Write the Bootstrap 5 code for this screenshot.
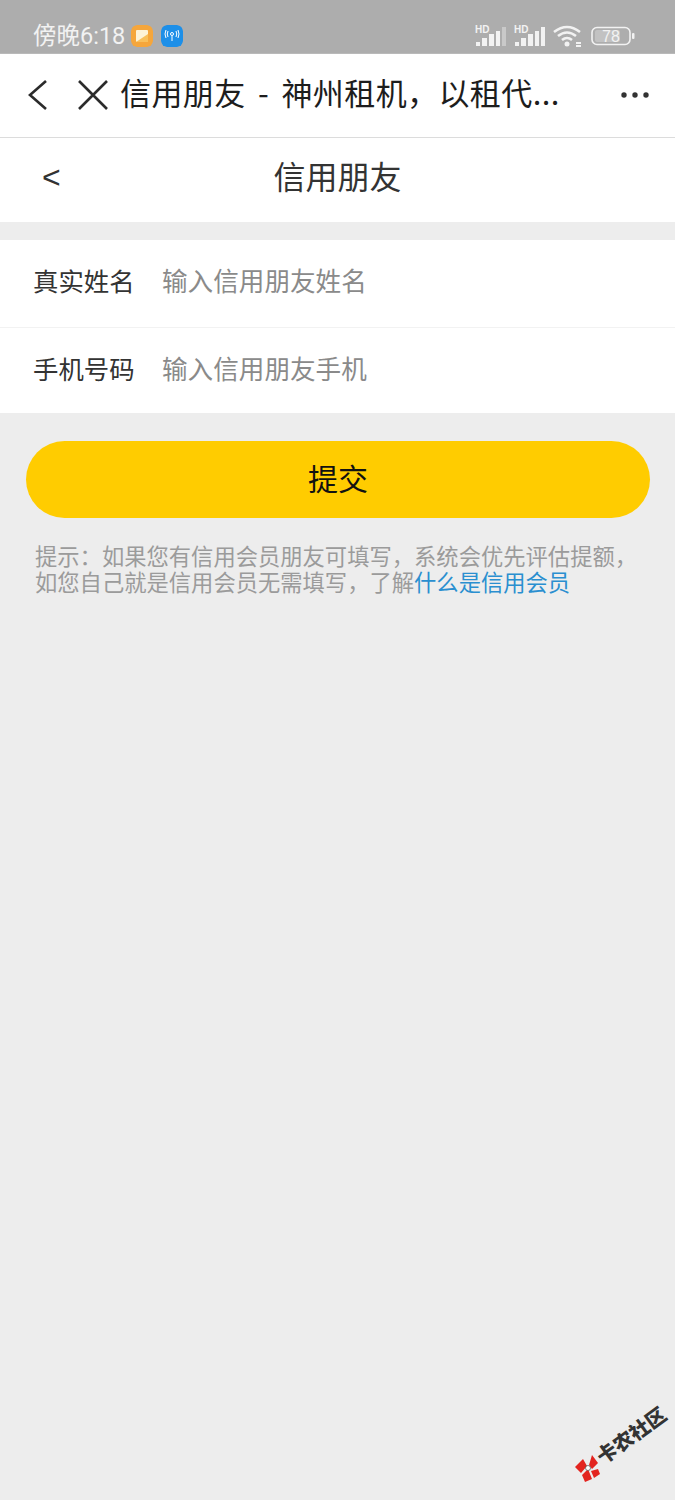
<!DOCTYPE html>
<html lang="zh-CN">
  <head>
    <meta charset="UTF-8" />
    <meta name="viewport" content="width=device-width, initial-scale=1.0" />
    <title>信用朋友</title>
    <link
      rel="stylesheet"
      href="https://cdn.jsdelivr.net/npm/bootstrap@5.3.3/dist/css/bootstrap.min.css"
    />
    <style>
      body {
        font-family: "Noto Sans CJK SC", "Liberation Sans", sans-serif;
        background: #ededed;
        height: 1500px;
        overflow: hidden;
      }
      .status-bar {
        height: 54px;
        background: #adadad;
        border-bottom: 1px solid #b9b9b9;
        padding: 18px 40px 0 33px;
        color: #f2f2f2;
      }
      .status-time {
        font-family: Roboto, "Noto Sans CJK SC", sans-serif;
        font-size: 23.5px;
        line-height: 37px;
        width: 98px;
        white-space: nowrap;
      }
      .app-tile {
        width: 22px;
        height: 22px;
        border-radius: 6px;
        margin-top: 7px;
      }
      .tile-gap {
        margin-right: 8px;
      }
      .status-icons {
        gap: 8px;
        margin-top: 7px;
      }
      .browser-bar {
        height: 84px;
        background: #fff;
        border-bottom: 1px solid #dcdcdc;
        padding: 0 25px 2px 26px;
      }
      .browser-title {
        font-size: 31px;
        letter-spacing: 0.4px;
        word-spacing: 5px;
        color: #1d1d1d;
        margin-left: 11px;
        padding-bottom: 4px;
        white-space: nowrap;
        width: 451px;
      }
      .back-btn {
        margin-right: 25px;
      }
      .page-head {
        height: 84px;
        background: #fff;
        position: relative;
        font-size: 32px;
        color: #333;
        padding-bottom: 10px;
      }
      .head-back {
        position: absolute;
        left: 42px;
        top: 17px;
        font-family: "Liberation Sans", sans-serif;
        font-size: 32px;
        line-height: 44px;
      }
      .form-block {
        margin-top: 18px;
        background: #fff;
      }
      .form-line {
        height: 87px;
        padding: 0 33px 6px;
        font-size: 25.4px;
        color: #333;
      }
      .form-line + .form-line {
        border-top: 1px solid #f2f2f2;
        height: 86px;
        padding-bottom: 4px;
      }
      .form-line label {
        width: 129px;
        flex: none;
      }
      .form-line input {
        border: 0;
        outline: 0;
        padding: 0;
        flex: 1;
        font-size: 25.6px;
        min-width: 0;
        background: transparent;
      }
      .form-line input::placeholder {
        color: #8a8a8a;
        opacity: 1;
      }
      .submit-btn {
        display: block;
        margin: 28px 25px 0 26px;
        width: 624px;
        height: 77px;
        border: 0;
        border-radius: 39px;
        background: #ffcc00;
        color: #111;
        font-size: 30px;
        padding: 0 0 5px;
      }
      .hint-text {
        margin: 24px 0 0 35px;
        width: 610px;
        font-size: 22.3px;
        line-height: 26px;
        color: #9b9b9b;
      }
      .hint-text a {
        color: #2a8fd0;
        text-decoration: none;
      }
      .watermark {
        position: absolute;
        left: 574px;
        top: 1406px;
        width: 100px;
        height: 78px;
      }
      .watermark-logo {
        margin-top: 48px;
      }
      .watermark-text {
        position: absolute;
        left: 17px;
        top: 19px;
        font-size: 20px;
        font-weight: 900;
        line-height: 20px;
        color: #333;
        white-space: nowrap;
        transform: rotate(-36deg);
      }
    </style>
  </head>
  <body>
    <div class="status-bar d-flex align-items-start">
      <span class="status-time">傍晚6:18</span>
      <svg class="app-tile tile-gap" viewBox="0 0 22 22">
        <rect width="22" height="22" rx="6" fill="#f5a63c" />
        <rect x="5" y="5" width="12" height="12" rx="1" fill="#fdf3d8" />
        <path d="M5 17 L17 9 V17 Z" fill="#f8c05c" />
      </svg>
      <svg class="app-tile" viewBox="0 0 22 22">
        <rect width="22" height="22" rx="6" fill="#1d8fe8" />
        <circle cx="11" cy="9" r="1.5" fill="none" stroke="#fff" />
        <path d="M11 11 V16 M7 6 Q5.500 9 7 12 M15 6 Q16.500 9 15 12 M5 5 Q3 9 5 13 M17 5 Q19 9 17 13" fill="none" stroke="#fff" stroke-width="1" />
      </svg>
      <div class="status-icons d-flex align-items-center ms-auto">
        <svg width="31" height="22" viewBox="0 0 31 22">
          <text x="0" y="8" font-family="Liberation Sans" font-size="10" font-weight="700" fill="#f2f2f2">HD</text>
          <rect x="1" y="17" width="4" height="4" fill="#f2f2f2" />
          <rect x="7" y="13" width="5" height="8" fill="#f2f2f2" />
          <rect x="14" y="9" width="5" height="12" fill="#f2f2f2" />
          <rect x="21" y="6" width="4" height="15" fill="#f2f2f2" />
          <rect x="27" y="2" width="4" height="19" fill="#c9c9c9" />
        </svg>
        <svg width="31" height="22" viewBox="0 0 31 22">
          <text x="0" y="8" font-family="Liberation Sans" font-size="10" font-weight="700" fill="#f2f2f2">HD</text>
          <rect x="1" y="17" width="4" height="4" fill="#f2f2f2" />
          <rect x="7" y="13" width="5" height="8" fill="#f2f2f2" />
          <rect x="14" y="9" width="5" height="12" fill="#f2f2f2" />
          <rect x="21" y="6" width="4" height="15" fill="#f2f2f2" />
          <rect x="27" y="2" width="4" height="19" fill="#f2f2f2" />
        </svg>
        <svg width="30" height="22" viewBox="0 0 30 22">
          <path d="M1 7 Q14 -3 27 7 M5 11 Q14 4 23 11 M9 15 Q14 11 19 15" fill="none" stroke="#f2f2f2" stroke-width="2.600" />
          <circle cx="14" cy="19" r="2.500" fill="#f2f2f2" />
          <path d="M23 18 h5 M23 21 h5" stroke="#f2f2f2" stroke-width="2" />
        </svg>
        <svg width="44" height="22" viewBox="0 0 44 22">
          <rect x="1" y="2.500" width="38" height="17" rx="5" fill="none" stroke="#f2f2f2" stroke-width="1.600" />
          <rect x="4" y="5" width="25" height="12" rx="2" fill="#c2c2c2" />
          <text x="20" y="17" text-anchor="middle" font-family="Liberation Sans" font-size="16" fill="#f2f2f2">78</text>
          <rect x="41" y="8" width="2.500" height="6" rx="1" fill="#f2f2f2" />
        </svg>
      </div>
    </div>

    <div class="browser-bar d-flex align-items-center">
      <svg class="back-btn" width="26" height="34" viewBox="0 0 26 34">
        <path d="M20 3 L4 17 L20 31" fill="none" stroke="#2b2b2b" stroke-width="2.600" />
      </svg>
      <svg width="32" height="32" viewBox="0 0 32 32">
        <path d="M2 2 L30 30 M30 2 L2 30" fill="none" stroke="#2b2b2b" stroke-width="2.600" />
      </svg>
      <div class="browser-title">信用朋友 - 神州租机，以租代...</div>
      <svg class="ms-auto" width="30" height="8" viewBox="0 0 30 8">
        <circle cx="4" cy="4" r="2.700" fill="#333" />
        <circle cx="15" cy="4" r="2.700" fill="#333" />
        <circle cx="26" cy="4" r="2.700" fill="#333" />
      </svg>
    </div>

    <div class="page-head d-flex align-items-center justify-content-center">
      <span class="head-back">&lt;</span>
      <span>信用朋友</span>
    </div>

    <form class="form-block">
      <div class="form-line d-flex align-items-center">
        <label for="realName">真实姓名</label>
        <input id="realName" type="text" placeholder="输入信用朋友姓名" />
      </div>
      <div class="form-line d-flex align-items-center">
        <label for="mobile">手机号码</label>
        <input id="mobile" type="text" placeholder="输入信用朋友手机" />
      </div>
    </form>

    <button class="btn submit-btn" type="button">提交</button>

    <p class="hint-text">
      提示：如果您有信用会员朋友可填写，系统会优先评估提额，如您自己就是信用会员无需填写，了解<a href="#">什么是信用会员</a>
    </p>

    <div class="watermark">
      <svg width="27" height="28" viewBox="0 0 27 28" class="d-block watermark-logo">
        <path d="M1 13 L9 5 L13 12 L7 19 Z M15 11 L18 1 L24 9 L18 15 Z M8 21 L14 15 L18 25 L11 28 Z M17 17 L24 15 L26 20 L20 24 Z" fill="#e3241f" />
        <circle cx="14" cy="14" r="2.500" fill="#fff" stroke="#333" stroke-width="0.600" />
      </svg>
      <span class="watermark-text">卡农社区</span>
    </div>
  </body>
</html>
